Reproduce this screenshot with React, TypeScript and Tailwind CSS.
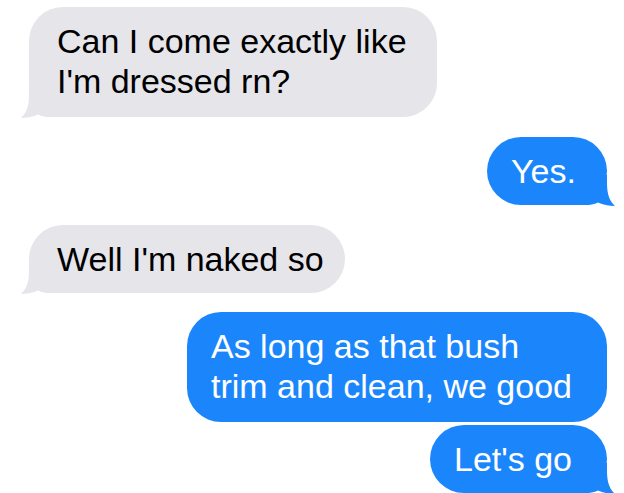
import React from 'react';

type Msg = {
  text: string[];
  me: boolean;
  tail: boolean;
  box: string;
};

const messages: Msg[] = [
  { text: ['Can I come exactly like', "I'm dressed rn?"], me: false, tail: true, box: 'mt-[7px] w-[408px] h-[110px]' },
  { text: ['Yes.'], me: true, tail: true, box: 'mt-[20px] w-[120px] h-[68px]' },
  { text: ["Well I'm naked so"], me: false, tail: true, box: 'mt-[20px] w-[316px] h-[68px]' },
  { text: ['As long as that bush', 'trim and clean, we good'], me: true, tail: false, box: 'mt-[19px] w-[420px] h-[110px]' },
  { text: ["Let's go"], me: true, tail: true, box: 'mt-[3px] w-[177px] h-[68px]' },
];

// tail drawn for a left bubble; mirrored for blue ones
const Tail: React.FC<{ me: boolean }> = ({ me }) => (
  <svg
    width="44"
    height="31"
    viewBox="0 0 44 31"
    className={`absolute -bottom-[1px] ${me ? '-right-[8px] -scale-x-100' : '-left-[8px]'}`}
  >
    <path
      d="M8 0 L8 8 C8 19 5.5 26 0 31 C7 31 12 29.5 17 27.5 C21 29.5 25 30 30 30 L44 30 L44 0 Z"
      fill={me ? '#1b86fb' : '#e5e5ea'}
    />
  </svg>
);

const Bubble: React.FC<{ msg: Msg }> = ({ msg }) => (
  <div
    className={`relative ${msg.box} rounded-[34px] py-[14px] ${
      msg.me
        ? 'self-end mr-[17px] pl-[24px] bg-[#1b86fb] text-white'
        : 'self-start ml-[29px] pl-[28px] bg-[#e5e5ea] text-black'
    }`}
  >
    {msg.tail && <Tail me={msg.me} />}
    <div className="relative text-[34px] leading-[40px] whitespace-nowrap">
      {msg.text.map((line, i) => (
        <div key={i}>{line}</div>
      ))}
    </div>
  </div>
);

export default function App() {
  return (
    <div
      className="w-[624px] h-[493px] overflow-hidden bg-white flex flex-col"
      style={{ fontFamily: '"Liberation Sans", Arial, sans-serif' }}
    >
      {messages.map((m, i) => (
        <Bubble key={i} msg={m} />
      ))}
    </div>
  );
}
